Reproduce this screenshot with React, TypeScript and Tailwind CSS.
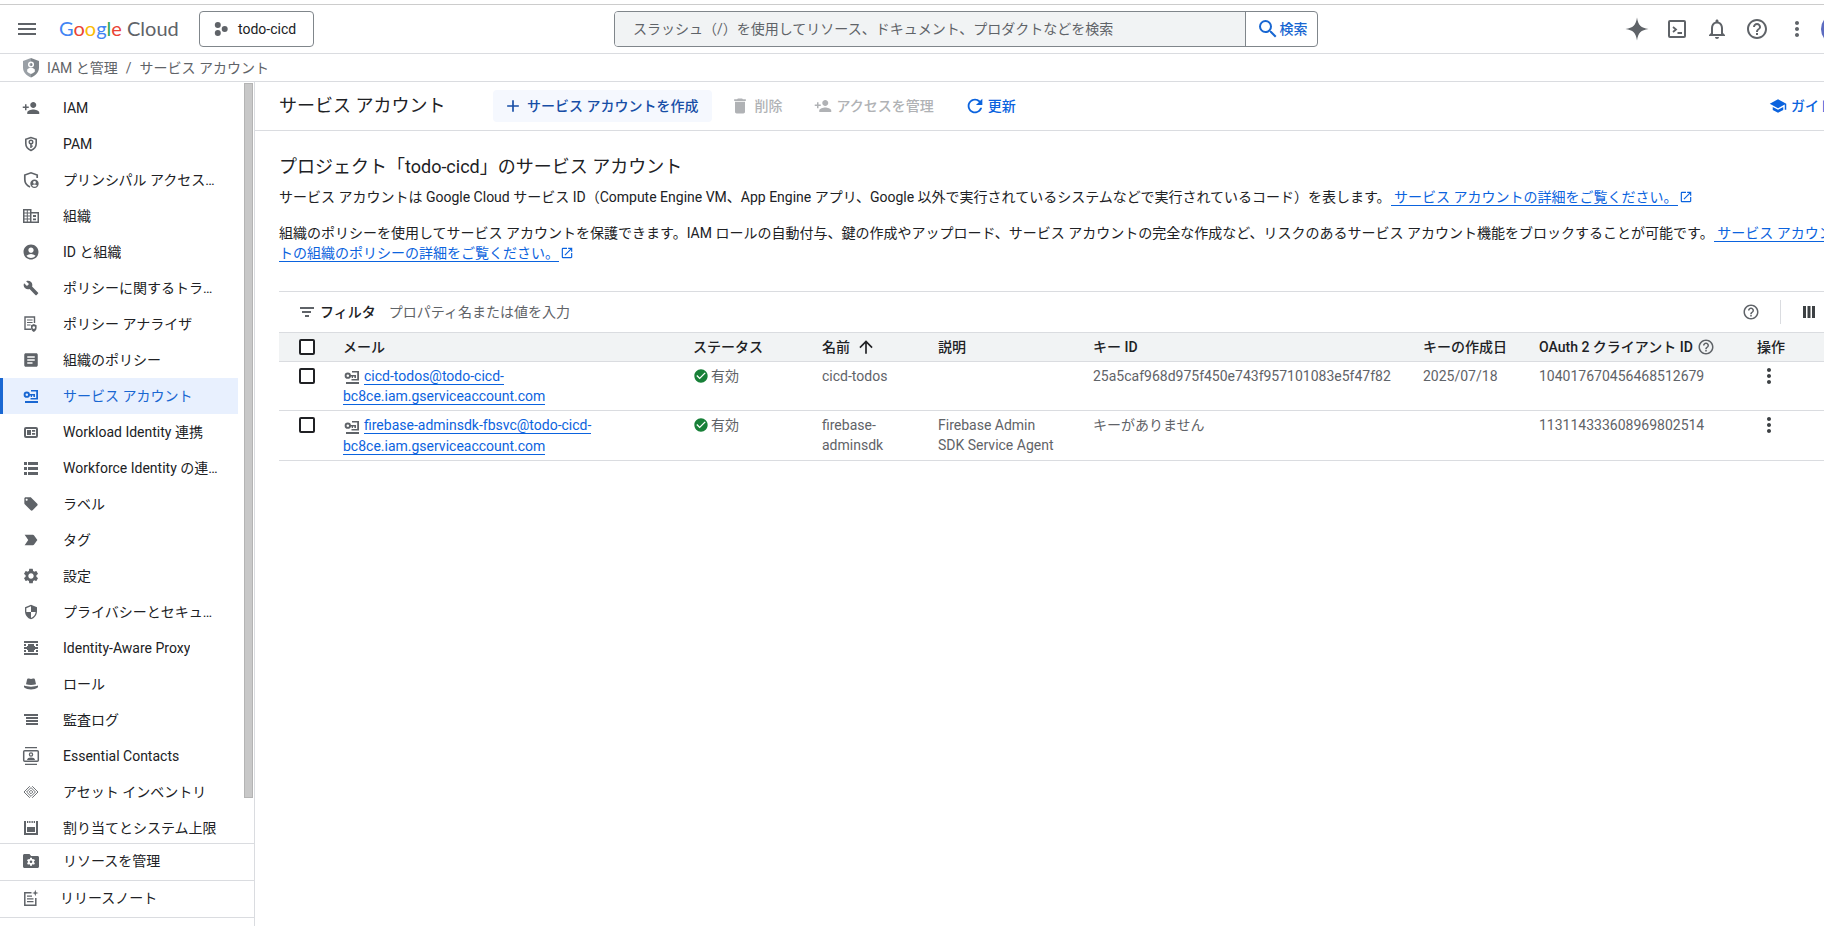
import { useState } from 'react';
import type { ComponentType, ReactNode } from 'react';
import {
  MdAccountCircle, MdAdd, MdArrowUpward, MdArticle, MdBuild, MdCheckCircle, MdDelete,
  MdHelpOutline, MdLabelImportant, MdLocalOffer, MdMenu, MdMoreVert, MdOpenInNew,
  MdOutlineNotifications, MdPersonAdd, MdRefresh, MdSchool, MdSearch, MdSecurity, MdSettings,
} from 'react-icons/md';

type IconProps = { className?: string };
type IconType = ComponentType<IconProps>;

function Svg({ className, children }: { className?: string; children: ReactNode }) {
  return <svg viewBox="0 0 18 18" className={className} fill="currentColor" aria-hidden="true">{children}</svg>;
}

const PamIcon = ({ className }: IconProps) => (
  <Svg className={className}>
    <path d="M9 2.500 3.800 4.300v4.300c0 3.200 2.100 5.600 5.200 6.900 3.100-1.300 5.200-3.700 5.200-6.900V4.300z" fill="none" stroke="currentColor" strokeWidth="1.600" />
    <circle cx="9" cy="7" r="1.800" fill="none" stroke="currentColor" strokeWidth="1.400" />
    <path d="M8.200 9h1.500v4H8.200zM9 10.500h1.800v1.300H9z" />
  </Svg>
);

const PrincipalIcon = ({ className }: IconProps) => (
  <Svg className={className}>
    <path d="M15.200 7V4L9 1.800 2.800 4v4.500c0 3.300 1.800 6 5.200 7.500" fill="none" stroke="currentColor" strokeWidth="1.700" />
    <path fillRule="evenodd" d="M12.500 8.500a4.200 4.200 0 1 1 0 8.400 4.200 4.200 0 0 1 0-8.400zm0 1.500a1.400 1.400 0 1 0 0 2.800 1.400 1.400 0 0 0 0-2.800zm-2.500 4.400c.6.8 1.500 1.300 2.500 1.300s1.900-.5 2.500-1.300c-.8-.5-1.600-.8-2.500-.8s-1.700.3-2.500.8z" />
  </Svg>
);

const OrgIcon = ({ className }: IconProps) => (
  <Svg className={className}>
    <path fillRule="evenodd" d="M1 2h8.500v3H17v11H1zm1.500 1.500v2H8v-2zm0 3v2H8v-2zm0 3v2H8v-2zm0 3v2H8v-2zm7-6v8h6v-8z" />
    <path d="M11 8h3v2h-3zM11 11.500h3v1.800h-3z" />
    <path d="M4.800 3h1v12h-1z" />
  </Svg>
);

const AnalyzerIcon = ({ className }: IconProps) => (
  <Svg className={className}>
    <path d="M9 14.300H3V2h9.500v6" fill="none" stroke="currentColor" strokeWidth="1.400" />
    <path d="M5 4.500h5.600v1H5zM5 7h5.600v1H5zM5 9.500h3.600v1H5z" />
    <path fillRule="evenodd" d="M11.800 9 9 10.200v2.600c0 2 1.200 3.400 2.800 4.200 1.700-.8 2.800-2.200 2.800-4.200v-2.600zm0 2.300a1.300 1.300 0 1 1 0 2.600 1.300 1.300 0 0 1 0-2.600z" />
  </Svg>
);

const ServiceAccountIcon = ({ className }: IconProps) => (
  <Svg className={className}>
    <path d="M3 14h13v2H3zM9 3h7v9.500H8.500V11h5.700V4.600H9z" />
    <circle cx="4.800" cy="7.700" r="2.200" fill="none" stroke="currentColor" strokeWidth="1.900" />
    <path d="M7 6.900h6v3h-1.600V8.500H10v1.400H8.700V8.500H7z" />
  </Svg>
);

const WorkloadIcon = ({ className }: IconProps) => (
  <Svg className={className}>
    <rect x="3" y="5" width="12" height="9" rx="1" fill="none" stroke="currentColor" strokeWidth="2" />
    <path d="M5 7h4v5H5zM10 7h3.200v1.800H10zM10 10h3.200v1.800H10z" />
  </Svg>
);

const WorkforceIcon = ({ className }: IconProps) => (
  <Svg className={className}>
    <path d="M2 3h3v3H2zM6 3h10v3H6zM2 8h3v3H2zM6 8h10v3H6zM2 13h3v3H2zM6 13h10v3H6z" />
  </Svg>
);

const ProxyIcon = ({ className }: IconProps) => (
  <Svg className={className}>
    <path d="M2 2h14v2H2zM2 14h14v2H2zM6 5h6v2h1v4h-1v2H6v-2H5V7h1zM2 5h2v2H2zM14 5h2v2h-2zM2 8h14v2H2zM2 11h2v2H2zM14 11h2v2h-2z" />
  </Svg>
);

const RoleIcon = ({ className }: IconProps) => (
  <Svg className={className}>
    <path d="M4 9.200 5 4.800c.2-1 1-1.500 2-1.200l2 .5 2-.5c1-.3 1.800.2 2 1.200l1 4.400c-2.800 1.100-7.200 1.100-10 0z" />
    <path d="M2 10.500c4 1.500 10 1.500 14 0v1.800c-3.500 3-10.500 3-14 0z" />
  </Svg>
);

const AuditIcon = ({ className }: IconProps) => (
  <Svg className={className}>
    <path d="M2 3h14v2H2zM4 6h12v2H4zM4 9h12v2H4zM4 12h12v2H4z" />
  </Svg>
);

const ContactsIcon = ({ className }: IconProps) => (
  <Svg className={className}>
    <path d="M3 0h12v1.300H3zM3 16.700h12V18H3z" />
    <rect x="1.700" y="3.700" width="14.600" height="10.600" rx="1" fill="none" stroke="currentColor" strokeWidth="1.500" />
    <circle cx="9" cy="7.500" r="1.600" fill="none" stroke="currentColor" strokeWidth="1.300" />
    <path d="M5 13c0-1.700 2-2.500 4-2.500s4 .8 4 2.500z" />
  </Svg>
);

const AssetIcon = ({ className }: IconProps) => (
  <Svg className={className}>
    <path d="M9 7.200 10.800 9 9 10.800 7.200 9zM9 4.600 13.400 9 9 13.400 4.600 9zM7.800 3.200 2 9l5.800 5.800M10.200 3.200 16 9l-5.800 5.800" fill="none" stroke="currentColor" strokeWidth=".9" />
  </Svg>
);

const QuotaIcon = ({ className }: IconProps) => (
  <Svg className={className}>
    <path d="M2 2h2v12h10V2h2v14H2zM5 8h8v5H5zM5 2h1.300v2H5zM7.200 2h1.300v2H7.200zM9.500 2h1.300v2H9.500zM11.700 2H13v2h-1.300z" />
  </Svg>
);

const FolderGearIcon = ({ className }: IconProps) => (
  <Svg className={className}>
    <path d="M2.500 2h5l1.600 2h6.400c.8 0 1.500.6 1.500 1.400v9.100c0 .8-.7 1.500-1.500 1.500h-13c-.8 0-1.500-.7-1.500-1.500v-11C1 2.700 1.700 2 2.500 2z" />
    <path d="M9 5.800v8M5.500 7.800l7 4M5.500 11.800l7-4" stroke="#fff" strokeWidth="2" />
    <circle cx="9" cy="9.800" r="3" fill="#fff" />
    <circle cx="9" cy="9.800" r="1.300" />
  </Svg>
);

const ReleaseNotesIcon = ({ className }: IconProps) => (
  <Svg className={className}>
    <path d="M9.500 3.800H2.800v12.400h11V9" fill="none" stroke="currentColor" strokeWidth="1.500" />
    <path d="M5 6.500h5v1.300H5zM5 9.200h6.500v1.300H5zM5 11.900h6.500v1.300H5z" />
    <path d="m13.300.8.8 2.400 2.400.8-2.400.8-.8 2.400-.8-2.400-2.400-.8 2.400-.8z" />
  </Svg>
);

const FilterIcon = ({ className }: IconProps) => (
  <Svg className={className}>
    <path d="M2 4h14v2H2zM4 8h9v2H4zM7 12h4v2H7z" />
  </Svg>
);

const IamShieldIcon = ({ className }: IconProps) => (
  <svg viewBox="0 0 16 20" className={className} aria-hidden="true">
    <path d="M8 0 0 3v6.500C0 14 3.300 17.800 8 19.500z" fill="#9aa0a6" />
    <path d="M8 0l8 3v6.500c0 4.500-3.300 8.300-8 10z" fill="#80868b" />
    <circle cx="8" cy="6.500" r="2.300" fill="none" stroke="#fff" strokeWidth="1.500" />
    <path d="M4.200 13.800v-2.300c1-1.300 2.400-1.800 3.800-1.800s2.800.5 3.800 1.800v2.300c-1 1-2.300 1.700-3.800 2.200-1.500-.5-2.800-1.200-3.800-2.200z" fill="#fff" />
  </svg>
);

const ProjectIcon = ({ className }: IconProps) => (
  <svg viewBox="0 0 14 14" className={className} fill="currentColor" aria-hidden="true">
    <circle cx="3.800" cy="3" r="3" />
    <circle cx="10.700" cy="7" r="3" />
    <circle cx="3.800" cy="11" r="3" />
  </svg>
);

const GeminiIcon = ({ className }: IconProps) => (
  <svg viewBox="0 0 24 24" className={className} fill="currentColor" aria-hidden="true">
    <path d="M12 .5c1 7.500 4 10.500 11.500 11.500C16 13 13 16 12 23.500 11 16 8 13 .5 12 8 11 11 8 12 .5z" />
  </svg>
);

const ShellIcon = ({ className }: IconProps) => (
  <svg viewBox="0 0 24 24" className={className} fill="none" stroke="currentColor" strokeWidth="2" aria-hidden="true">
    <rect x="4" y="4" width="16" height="16" rx="1" />
    <path d="m8 10 3 2.500L8 15M12.500 16H17" strokeWidth="1.800" />
  </svg>
);

const ColumnsIcon = ({ className }: IconProps) => (
  <svg viewBox="0 0 12 12" className={className} fill="currentColor" aria-hidden="true">
    <path d="M0 0h3v12H0zM4.500 0h3v12h-3zM9 0h3v12H9z" />
  </svg>
);

const navItems: { label: string; icon: IconType; small?: boolean }[] = [
  { label: 'IAM', icon: MdPersonAdd },
  { label: 'PAM', icon: PamIcon },
  { label: 'プリンシパル アクセス境界', icon: PrincipalIcon },
  { label: '組織', icon: OrgIcon },
  { label: 'ID と組織', icon: MdAccountCircle },
  { label: 'ポリシーに関するトラブルシューティング', icon: MdBuild, small: true },
  { label: 'ポリシー アナライザ', icon: AnalyzerIcon },
  { label: '組織のポリシー', icon: MdArticle },
  { label: 'サービス アカウント', icon: ServiceAccountIcon },
  { label: 'Workload Identity 連携', icon: WorkloadIcon },
  { label: 'Workforce Identity の連携', icon: WorkforceIcon },
  { label: 'ラベル', icon: MdLocalOffer, small: true },
  { label: 'タグ', icon: MdLabelImportant },
  { label: '設定', icon: MdSettings },
  { label: 'プライバシーとセキュリティ', icon: MdSecurity, small: true },
  { label: 'Identity-Aware Proxy', icon: ProxyIcon },
  { label: 'ロール', icon: RoleIcon },
  { label: '監査ログ', icon: AuditIcon },
  { label: 'Essential Contacts', icon: ContactsIcon },
  { label: 'アセット インベントリ', icon: AssetIcon },
  { label: '割り当てとシステム上限', icon: QuotaIcon },
];

const accounts = [
  {
    email: 'cicd-todos@todo-cicd-bc8ce.iam.gserviceaccount.com',
    name: 'cicd-todos',
    description: '',
    keyId: '25a5caf968d975f450e743f957101083e5f47f82',
    created: '2025/07/18',
    clientId: '104017670456468512679',
  },
  {
    email: 'firebase-adminsdk-fbsvc@todo-cicd-bc8ce.iam.gserviceaccount.com',
    name: 'firebase-adminsdk',
    description: 'Firebase Admin SDK Service Agent',
    keyId: 'キーがありません',
    created: '',
    clientId: '113114333608969802514',
  },
];

function Checkbox({ label }: { label: string }) {
  return (
    <input type="checkbox" aria-label={label}
      className="block w-4 h-4 appearance-none rounded-xs border-2 border-[#202124] bg-white checked:bg-[#1967d2]" />
  );
}

function DocLink({ children }: { children: ReactNode }) {
  return (
    <>
      <a href="#docs" className="border-b border-[#0b63de] text-[#0b63de] whitespace-pre-wrap"> {children}</a>
      <MdOpenInNew className="inline w-3.5 h-3.5 ml-px mb-0.5 text-[#0b63de]" />
    </>
  );
}

function Header() {
  return (
    <header className="flex items-center h-[49px] border-b border-[#dadce0] pl-[15px] pr-[11px] text-[#5f6368]">
      <button type="button" aria-label="メニュー"><MdMenu className="w-6 h-6" /></button>
      <a href="#home" className="ml-5 w-[118px] pb-0.5 whitespace-nowrap font-[Lato,'Liberation_Sans',sans-serif] text-xl leading-6">
        <span className="text-[#4285f4]">G</span>
        <span className="text-[#ea4335]">o</span>
        <span className="text-[#fbbc04]">o</span>
        <span className="text-[#4285f4]">g</span>
        <span className="text-[#34a853]">l</span>
        <span className="text-[#ea4335]">e</span>
        {' '}Cloud
      </a>
      <button type="button" className="ml-[22px] w-[115px] flex items-center gap-2.5 h-9 pl-3.5 border border-[#80868b] rounded text-[#202124] whitespace-nowrap">
        <ProjectIcon className="w-3.5 h-3.5 text-[#5f6368]" />
        todo-cicd
      </button>
      <form className="ml-[300px] flex h-9 w-[704px] border border-[#80868b] rounded overflow-hidden" onSubmit={e => e.preventDefault()}>
        <input type="search" aria-label="検索" placeholder="スラッシュ（/）を使用してリソース、ドキュメント、プロダクトなどを検索"
          className="flex-1 min-w-0 px-[18px] bg-[#f1f3f4] outline-none placeholder:text-[#5f6368]" />
        <button type="submit" className="w-[72px] flex items-center justify-center border-l border-[#80868b] text-[#1967d2] font-medium">
          <MdSearch className="w-6 h-6" />
          検索
        </button>
      </form>
      <div className="ml-auto flex items-center gap-4">
        <button type="button" aria-label="Gemini"><GeminiIcon className="w-6 h-6" /></button>
        <button type="button" aria-label="Cloud Shell"><ShellIcon className="w-6 h-6" /></button>
        <button type="button" aria-label="通知"><MdOutlineNotifications className="w-6 h-6" /></button>
        <button type="button" aria-label="ヘルプ"><MdHelpOutline className="w-6 h-6" /></button>
        <button type="button" aria-label="その他"><MdMoreVert className="w-6 h-6" /></button>
        <button type="button" aria-label="アカウント" className="w-8 h-8 -ml-1 rounded-full bg-[#5c6bc0]" />
      </div>
    </header>
  );
}

function Sidebar() {
  const [active, setActive] = useState('サービス アカウント');

  return (
    <aside className="w-[255px] shrink-0 flex flex-col border-r border-[#dadce0]">
      <div className="flex h-[761px] overflow-hidden">
        <nav className="w-[238px] pt-2">
          {navItems.map(({ label, icon: Icon, small }) => (
            <a key={label} href="#nav" onClick={() => setActive(label)}
              className={`flex items-center h-9 border-l-3 pl-[19px] pr-4 ${
                label === active ? 'border-[#1967d2] bg-[#e8f0fe] text-[#1967d2]' : 'border-transparent text-[#202124]'
              }`}>
              <span className={`w-[18px] shrink-0 flex justify-center ${label === active ? 'text-[#1967d2]' : 'text-[#5f6368]'}`}>
                <Icon className={small ? 'w-4 h-4' : 'w-[18px] h-[18px]'} />
              </span>
              <span className="ml-[23px] truncate">{label}</span>
            </a>
          ))}
        </nav>
        {/* scrollbar thumb */}
        <div className="ml-1.5 mt-px w-[9px] h-[715px] bg-[#c8c8c8] border border-[#b4b4b4]" />
      </div>
      <a href="#resources" className="flex items-center h-[37px] border-t border-[#dadce0] pl-[22px] pb-0.5 text-[#202124]">
        <FolderGearIcon className="w-[18px] h-[18px] text-[#5f6368]" />
        <span className="ml-[23px]">リソースを管理</span>
      </a>
      <a href="#release-notes" className="flex items-center h-[38px] border-y border-[#dadce0] pl-[22px] pb-0.5 text-[#202124]">
        <ReleaseNotesIcon className="w-[18px] h-[18px] text-[#5f6368]" />
        <span className="ml-5">リリースノート</span>
      </a>
    </aside>
  );
}

function Toolbar() {
  return (
    <div className="flex items-center h-[49px] border-b border-[#dadce0] pl-6 font-medium whitespace-nowrap">
      <h1 className="w-[214px] text-lg font-normal text-[#202124]">サービス アカウント</h1>
      <button type="button" className="flex items-center gap-1 h-8 pl-2.5 pr-3.5 rounded bg-[#f5f8fe] text-[#174ea6]">
        <MdAdd className="w-5 h-5" />
        サービス アカウントを作成
      </button>
      <button type="button" disabled className="ml-[18px] flex items-center gap-1 text-[#b0b2b5]">
        <MdDelete className="w-5 h-5" />
        削除
      </button>
      <button type="button" disabled className="ml-8 flex items-center gap-1 text-[#b0b2b5]">
        <MdPersonAdd className="w-[18px] h-[18px]" />
        アクセスを管理
      </button>
      <button type="button" className="ml-[30px] flex items-center gap-0.5 text-[#0b63de]">
        <MdRefresh className="w-[22px] h-[22px]" />
        更新
      </button>
      <button type="button" className="ml-auto mr-[31px] flex items-center gap-1 text-[#0b63de]">
        <MdSchool className="w-[18px] h-[18px]" />
        ガイド
      </button>
    </div>
  );
}

function AccountTable() {
  return (
    <table className="w-full table-fixed border-collapse text-left text-[#5f6368]">
      <colgroup>
        <col className="w-12" />
        <col className="w-[350px]" />
        <col className="w-[129px]" />
        <col className="w-[116px]" />
        <col className="w-[155px]" />
        <col className="w-[330px]" />
        <col className="w-[116px]" />
        <col className="w-[218px]" />
        <col />
      </colgroup>
      <thead>
        <tr className="h-[29px] bg-[#f1f3f4] border-y border-[#dadce0] text-[#202124] whitespace-nowrap [&>th]:font-medium [&>th]:py-1 [&>th]:pl-4">
          <th><div className="pl-1"><Checkbox label="すべて選択" /></div></th>
          <th>メール</th>
          <th>ステータス</th>
          <th>
            <button type="button" className="flex items-center gap-1.5 font-medium">
              名前 <MdArrowUpward className="w-5 h-5" />
            </button>
          </th>
          <th>説明</th>
          <th>キー ID</th>
          <th>キーの作成日</th>
          <th>
            <span className="flex items-center gap-1">
              OAuth 2 クライアント ID <MdHelpOutline className="w-[18px] h-[18px] text-[#5f6368]" />
            </span>
          </th>
          <th>操作</th>
        </tr>
      </thead>
      <tbody>
        {accounts.map(a => (
          <tr key={a.email} className="border-b border-[#dadce0] align-top [&>td]:py-1 [&>td]:px-4">
            <td><div className="pl-1 pt-0.5"><Checkbox label={a.email} /></div></td>
            <td>
              <ServiceAccountIcon className="inline w-[18px] h-[18px] mr-[3px]" />
              <a href="#account" className="border-b border-[#0b63de] text-[#0b63de]">{a.email}</a>
            </td>
            <td>
              <span className="flex items-center gap-0.5">
                <MdCheckCircle className="w-4 h-4 text-[#188038]" />
                有効
              </span>
            </td>
            <td>{a.name}</td>
            <td>{a.description}</td>
            <td>{a.keyId}</td>
            <td>{a.created}</td>
            <td>{a.clientId}</td>
            <td>
              <button type="button" aria-label="操作" className="block text-[#3c4043]"><MdMoreVert className="w-6 h-6 -my-0.5" /></button>
            </td>
          </tr>
        ))}
      </tbody>
    </table>
  );
}

export default function App() {
  return (
    <div className="min-h-screen overflow-hidden bg-white pt-1 font-[Roboto,'Noto_Sans_CJK_JP',sans-serif] text-sm text-[#202124]">
      <div className="w-[calc(100%+40px)] border-t border-[#ccc]">
        <Header />

        {/* Breadcrumb */}
        <div className="flex items-center h-7 border-b border-[#dadce0] pl-[23px] text-[#5f6368]">
          <IamShieldIcon className="w-4 h-5 mr-2" />
          <a href="#iam">IAM と管理</a>
          <span className="mx-2">/</span>
          <a href="#accounts">サービス アカウント</a>
        </div>

        <div className="flex min-h-[844px]">
          <Sidebar />
          <main className="flex-1 min-w-0">
            <Toolbar />
            <div className="px-6 pt-[22px]">
              <h2 className="text-lg leading-7">プロジェクト「todo-cicd」のサービス アカウント</h2>
              <p className="mt-1.5">
                サービス アカウントは Google Cloud サービス ID（Compute Engine VM、App Engine アプリ、Google 以外で実行されているシステムなどで実行されているコード）を表します。
                <DocLink>サービス アカウントの詳細をご覧ください。</DocLink>
              </p>
              <p className="mt-4">
                組織のポリシーを使用してサービス アカウントを保護できます。IAM ロールの自動付与、鍵の作成やアップロード、サービス アカウントの完全な作成など、リスクのあるサービス アカウント機能をブロックすることが可能です。
                <DocLink>サービス アカウントの組織のポリシーの詳細をご覧ください。</DocLink>
              </p>

              {/* Filter */}
              <div className="mt-7 flex items-center h-[41px] border-t border-[#dadce0] pl-[19px] pr-[25px]">
                <FilterIcon className="w-[18px] h-[18px] text-[#5f6368]" />
                <label htmlFor="filter" className="ml-1 font-medium">フィルタ</label>
                <input id="filter" placeholder="プロパティ名または値を入力"
                  className="ml-[13px] flex-1 min-w-0 outline-none placeholder:text-[#5f6368]" />
                <button type="button" aria-label="ヘルプ" className="text-[#5f6368]"><MdHelpOutline className="w-[18px] h-[18px]" /></button>
                <div className="ml-5 mr-[22px] h-6 border-l border-[#dadce0]" />
                <button type="button" aria-label="列の表示" className="text-[#3c4043]"><ColumnsIcon className="w-3 h-3" /></button>
              </div>
              <AccountTable />
            </div>
          </main>
        </div>
      </div>
    </div>
  );
}
